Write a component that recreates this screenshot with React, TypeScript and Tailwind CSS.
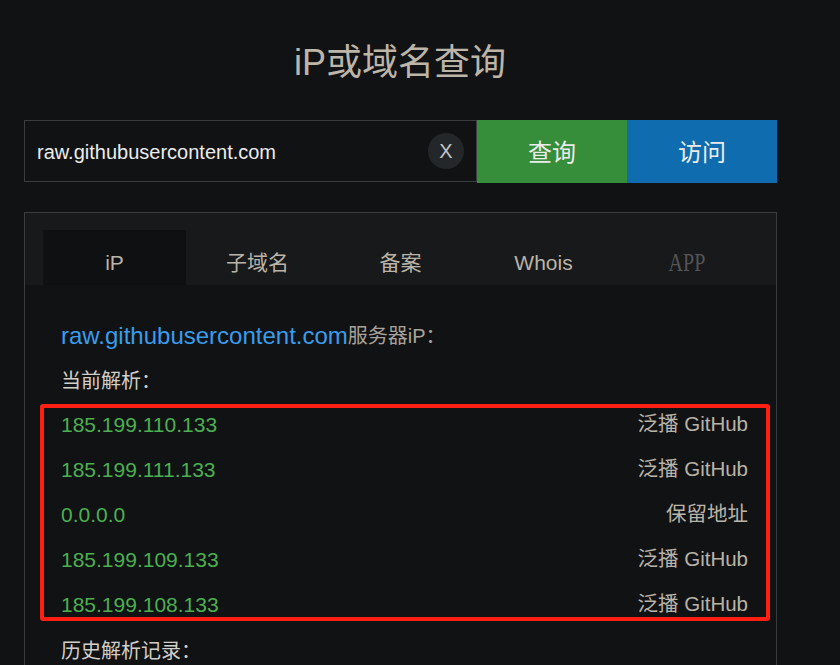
import React from "react";

const rows = [
  { ip: "185.199.110.133", note: "泛播 GitHub" },
  { ip: "185.199.111.133", note: "泛播 GitHub" },
  { ip: "0.0.0.0", note: "保留地址" },
  { ip: "185.199.109.133", note: "泛播 GitHub" },
  { ip: "185.199.108.133", note: "泛播 GitHub" },
];

const tabs = ["iP", "子域名", "备案", "Whois"];

export default function App() {
  return (
    <div
      className="h-[665px] w-[840px] overflow-hidden bg-[#111214] text-[20px] text-[#bab3a8]"
      style={{ fontFamily: '"Liberation Sans", "Noto Sans CJK SC", sans-serif' }}
    >
      {/* Title */}
      <h1 className="flex h-[120px] items-start justify-center pt-[41px] pr-[40px] text-[36px] leading-[44px] text-[#bdb5a8]">
        iP或域名查询
      </h1>

      {/* Search bar */}
      <div className="ml-[24px] flex h-[63px] w-[753px]">
        <div className="flex h-[62px] flex-1 items-center border border-[#3a3d40] bg-[#111213] pl-[12px] pr-[12px]">
          <span className="flex-1 pt-[2px] text-[20px] text-[#ececec]">raw.githubusercontent.com</span>
          <span className="flex h-[36px] w-[36px] items-center justify-center rounded-full bg-[#24272a] text-[20px] text-[#c4c4c4]">
            X
          </span>
        </div>
        <button className="flex w-[150px] items-center justify-center bg-[#368e3a] pt-[2px] text-[24px] text-[#ececec]">
          查询
        </button>
        <button className="flex w-[150px] items-center justify-center bg-[#0f6caf] pt-[2px] text-[24px] text-[#ececec]">
          访问
        </button>
      </div>

      {/* Result panel */}
      <div className="ml-[24px] mt-[29px] w-[753px] border border-[#3a3d40] bg-[#111214]">
        <div className="flex bg-[#17191b] pl-[18px] pt-[17px]">
          {tabs.map((t, i) => (
            <div
              key={t}
              className={
                i === 0
                  ? "flex h-[55px] w-[143px] items-center justify-center bg-[#0f1012] pt-[10px] text-[21px]"
                  : "flex h-[55px] w-[143px] items-center justify-center pt-[10px] text-[21px]"
              }
            >
              {t}
            </div>
          ))}
          <div className="flex h-[55px] w-[143px] items-center justify-center pt-[10px]">
            <span
              className="scale-x-[0.8] text-[25px] text-[#545454]"
              style={{ fontFamily: '"Liberation Serif", serif' }}
            >
              APP
            </span>
          </div>
        </div>

        <div className="pt-[28px] pb-[20px]">
          <div className="flex h-[45px] items-center pl-[36px] text-[#a8a29a]">
            <span className="text-[24px] text-[#389ded]">raw.githubusercontent.com</span>
            服务器iP：
          </div>
          <div className="flex h-[45px] items-center pl-[36px] text-[#d2cec8]">当前解析：</div>

          <div className="ml-[15px] mr-[6px] mt-[1px] rounded-[3px] border-[4px] border-[#ff1e12]">
            <div className="-my-[8px] flex flex-col">
              {rows.map((r, i) => (
                <div key={i} className="flex h-[45px] items-center justify-between pl-[17px] pr-[18px] pt-[4px]">
                  <span className="text-[21px] text-[#4caf50]">{r.ip}</span>
                  <span className="text-[20.5px]">{r.note}</span>
                </div>
              ))}
            </div>
          </div>

          <div className="mt-[5px] flex h-[45px] items-center pl-[36px] pt-[4px] text-[#d2cec8]">历史解析记录：</div>
        </div>
      </div>
    </div>
  );
}
